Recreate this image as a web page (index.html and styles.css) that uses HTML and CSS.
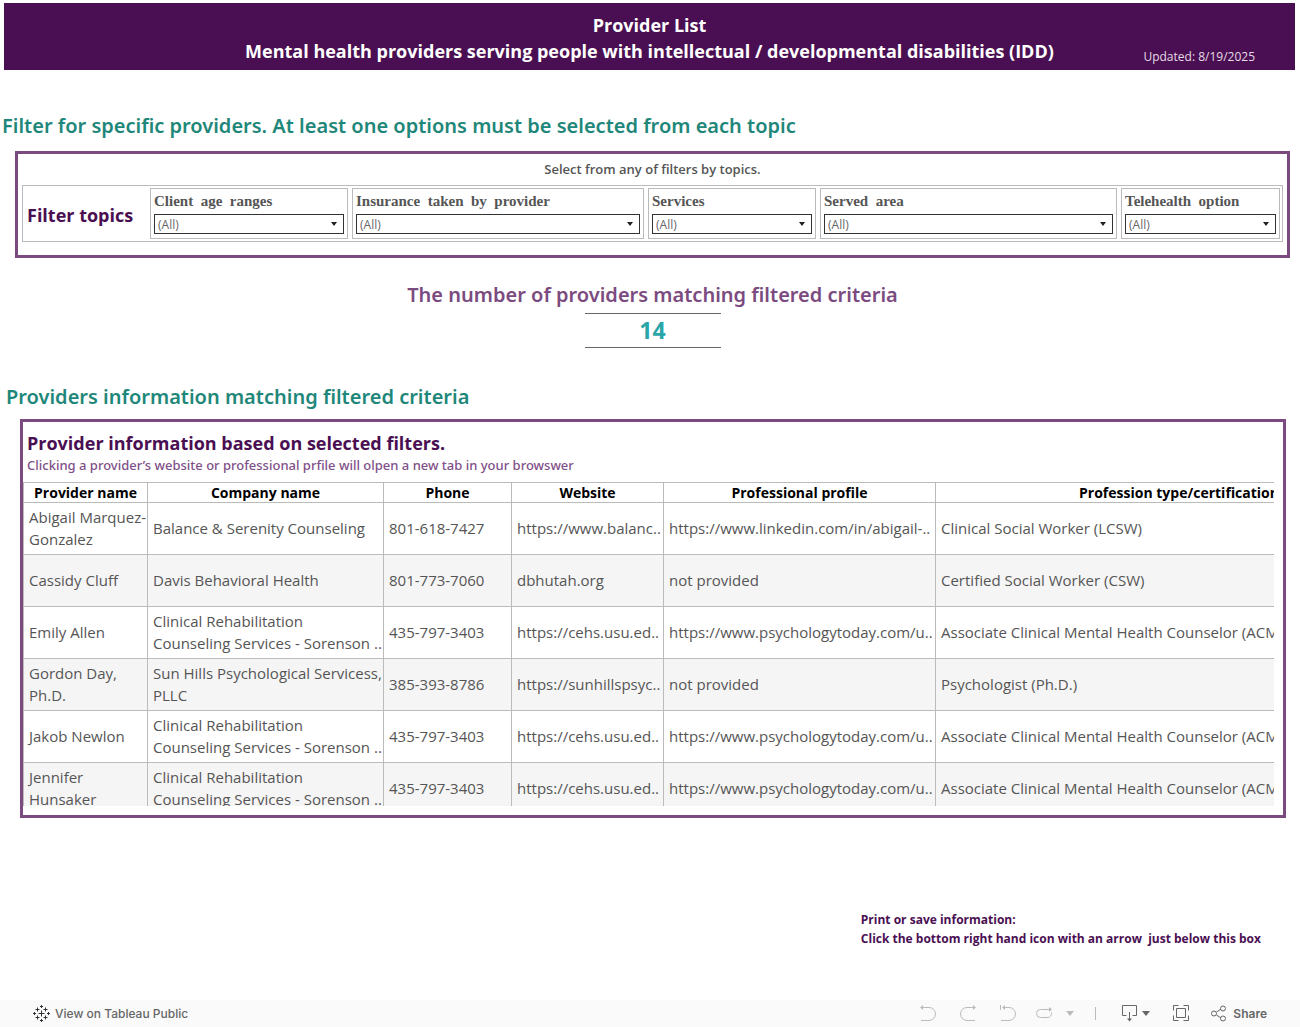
FILE: index.html
```html
<!DOCTYPE html>
<html lang="en">
<head>
<meta charset="utf-8">
<title>Provider List</title>
<link rel="stylesheet" href="styles.css">
</head>
<body>
<header class="banner">
  <h1 class="banner-title">Provider List<br>Mental health providers serving people with intellectual / developmental disabilities (IDD)</h1>
  <p class="updated">Updated: 8/19/2025</p>
</header>
<main class="main">
  <h2 class="section-title filter-title">Filter for specific providers. At least one options must be selected from each topic</h2>
  <section class="filter-panel">
    <p class="filter-hint">Select from any of filters by topics.</p>
    <div class="filters">
      <h3 class="filters-label">Filter topics</h3>
      <div class="filter"><label for="age">Client  age  ranges</label><div class="dropdown"><select id="age"><option>(All)</option></select></div></div>
      <div class="filter"><label for="insurance">Insurance  taken  by  provider</label><div class="dropdown"><select id="insurance"><option>(All)</option></select></div></div>
      <div class="filter"><label for="services">Services</label><div class="dropdown"><select id="services"><option>(All)</option></select></div></div>
      <div class="filter"><label for="area">Served  area</label><div class="dropdown"><select id="area"><option>(All)</option></select></div></div>
      <div class="filter"><label for="telehealth">Telehealth  option</label><div class="dropdown"><select id="telehealth"><option>(All)</option></select></div></div>
    </div>
  </section>
  <section class="count">
    <h2 class="count-title">The number of providers matching filtered criteria</h2>
    <p class="count-value">14</p>
  </section>
  <h2 class="section-title results-title">Providers information matching filtered criteria</h2>
  <section class="results">
    <h3 class="results-heading">Provider information based on selected filters.</h3>
    <p class="results-note">Clicking a provider’s website or professional prfile will olpen a new tab in your browswer</p>
    <div class="table-view">
      <table class="providers">
        <colgroup><col class="c-name"><col class="c-company"><col class="c-phone"><col class="c-site"><col class="c-profile"><col class="c-type"></colgroup>
        <thead>
          <tr><th>Provider name</th><th>Company name</th><th>Phone</th><th>Website</th><th>Professional profile</th><th>Profession type/certification</th></tr>
        </thead>
        <tbody>
          <tr><td>Abigail Marquez-<br>Gonzalez</td><td>Balance &amp; Serenity Counseling</td><td>801-618-7427</td><td><a href="#">https://www.balanc..</a></td><td><a href="#">https://www.linkedin.com/in/abigail-..</a></td><td>Clinical Social Worker (LCSW)</td></tr>
          <tr><td>Cassidy Cluff</td><td>Davis Behavioral Health</td><td>801-773-7060</td><td><a href="#">dbhutah.org</a></td><td>not provided</td><td>Certified Social Worker (CSW)</td></tr>
          <tr><td>Emily Allen</td><td>Clinical Rehabilitation<br>Counseling Services - Sorenson ..</td><td>435-797-3403</td><td><a href="#">https://cehs.usu.ed..</a></td><td><a href="#">https://www.psychologytoday.com/u..</a></td><td>Associate Clinical Mental Health Counselor (ACMHC)</td></tr>
          <tr><td>Gordon Day,<br>Ph.D.</td><td>Sun Hills Psychological Servicess,<br>PLLC</td><td>385-393-8786</td><td><a href="#">https://sunhillspsyc..</a></td><td>not provided</td><td>Psychologist (Ph.D.)</td></tr>
          <tr><td>Jakob Newlon</td><td>Clinical Rehabilitation<br>Counseling Services - Sorenson ..</td><td>435-797-3403</td><td><a href="#">https://cehs.usu.ed..</a></td><td><a href="#">https://www.psychologytoday.com/u..</a></td><td>Associate Clinical Mental Health Counselor (ACMHC)</td></tr>
          <tr><td>Jennifer<br>Hunsaker</td><td>Clinical Rehabilitation<br>Counseling Services - Sorenson ..</td><td>435-797-3403</td><td><a href="#">https://cehs.usu.ed..</a></td><td><a href="#">https://www.psychologytoday.com/u..</a></td><td>Associate Clinical Mental Health Counselor (ACMHC)</td></tr>
        </tbody>
      </table>
    </div>
  </section>
  <p class="print-note">Print or save information:
Click the bottom right hand icon with an arrow  just below this box</p>
</main>
<footer class="toolbar">
  <a class="public-link" href="#">
    <svg width="17" height="17" viewBox="0 0 17 17" stroke="#333"><path d="M8.500 5.500v6M5.500 8.500h6M4.500 2.500v4M2.500 4.500h4M12.500 2.500v4M10.500 4.500h4M4.500 10.500v4M2.500 12.500h4M12.500 10.500v4M10.500 12.500h4M8.500 0v3M7 1.500h3M8.500 14v3M7 15.500h3M1.500 7v3M0 8.500h3M15.500 7v3M14 8.500h3"/></svg>
    View on Tableau Public
  </a>
  <div class="tools">
    <div class="history">
      <button class="tool" type="button" aria-label="Undo" disabled><svg width="16" height="17" viewBox="0 0 16 17"><path class="line" d="M2 2.500h7a6.500 6.500 0 0 1 0 13H1"/><path class="fill" d="M0 2.500 3 0v5z"/></svg></button>
      <button class="tool" type="button" aria-label="Redo" disabled><svg width="16" height="17" viewBox="0 0 16 17"><path class="line" d="M14 2.500H7a6.500 6.500 0 0 0 0 13h8"/><path class="fill" d="M16 2.500 13 0v5z"/></svg></button>
      <button class="tool" type="button" aria-label="Revert" disabled><svg width="16" height="17" viewBox="0 0 16 17"><path class="line" d="M.5 0v5M4 2.500h5a6.500 6.500 0 0 1 0 13H1"/><path class="fill" d="M2 2.500 5 0v5z"/></svg></button>
    </div>
    <button class="tool refresh" type="button" aria-label="Refresh" disabled><svg width="17" height="17" viewBox="0 0 17 17"><path class="line" d="M14 4.500H4.500a4 4 0 0 0 0 8h7.500a4 4 0 0 0 3.500-4.500V7.500"/><path class="fill" d="m16 4.500-3-2.500v5z"/></svg><svg width="8" height="5" viewBox="0 0 8 5"><path class="fill" d="M0 0h8L4 5z"/></svg></button>
    <span class="divider"></span>
    <button class="tool download" type="button" aria-label="Download"><svg width="15" height="17" viewBox="0 0 15 17"><path class="line" d="M4.500 10.500h-4V.5h14v10h-4M7.500 7v8"/><path class="fill" d="M5 13.500h5L7.500 16.500z"/></svg><svg width="8" height="5" viewBox="0 0 8 5"><path class="fill" d="M0 0h8L4 5z"/></svg></button>
    <button class="tool fullscreen" type="button" aria-label="Full screen"><svg width="17" height="17" viewBox="0 0 17 17"><path class="line" d="M3.500 3.500h9v9h-9zM.5 5.500V.5h5M10.500.5h5v5M15.500 10.500v5h-5M5.500 15.500h-5v-5"/></svg></button>
    <button class="tool share" type="button"><svg width="16" height="17" viewBox="0 0 16 17"><path class="line" d="M5.500 7 10 4M5.500 10l4.500 3M.5 8.500a2.500 2.500 0 1 0 5 0 2.500 2.500 0 1 0-5 0M9.500 3.500a2.500 2.500 0 1 0 5 0 2.500 2.500 0 1 0-5 0M9.500 13.500a2.500 2.500 0 1 0 5 0 2.500 2.500 0 1 0-5 0"/></svg>Share</button>
  </div>
</footer>
</body>
</html>
```

FILE: styles.css
```css
* { box-sizing: border-box; }

body {
  margin: 0;
  min-height: 100vh;
  display: flex;
  flex-direction: column;
  background: #fff;
  color: #555;
  font-family: "Open Sans", "Noto Sans", sans-serif;
}

h1, h2, h3, p { margin: 0; }

.banner {
  display: grid;
  margin: 3px 5px 0 4px;
  padding: 9px 40px 5px;
  background: #4a0f52;
  color: #fff;
}
.banner-title {
  grid-area: 1 / 1;
  text-align: center;
  font-size: 18px;
  line-height: 26px;
  font-weight: 700;
  margin-bottom: 1px;
}
.updated {
  grid-area: 1 / 1;
  place-self: end;
  font-size: 12px;
  line-height: 16px;
  font-weight: 400;
  color: #e4dbe5;
}

.main { flex: 1; }

.section-title {
  color: #1f877a;
  font-family: "Noto Sans", sans-serif;
  font-size: 20px;
  line-height: 28px;
  font-weight: 600;
}
.filter-title { margin: 42px 0 0 2px; }
.results-title { margin: 35px 0 0 6px; }

.filter-panel {
  margin: 11px 10px 0 15px;
  border: 3px solid #7b4b80;
  padding: 3px 4px 13px;
}
.filter-hint {
  text-align: center;
  font-size: 13px;
  line-height: 24px;
  font-weight: 600;
  margin-bottom: 4px;
}
.filters {
  display: grid;
  grid-template-columns: 121fr 198fr 292fr 168fr 297fr 159fr;
  gap: 4px;
  padding: 2px;
  border: 1px solid #bbb;
}
.filters-label {
  align-self: center;
  padding: 2px 0 0 2px;
  white-space: nowrap;
  font-size: 18px;
  line-height: 26px;
  font-weight: 700;
  color: #4a0f52;
}
.filter {
  border: 1px solid #bbb;
  padding: 2px 3px 4px;
}
.filter label {
  display: block;
  white-space: pre;
  font-family: "Liberation Serif", serif;
  font-size: 15px;
  line-height: 20px;
  font-weight: 700;
  margin-bottom: 3px;
}
.dropdown { display: grid; align-items: center; }
.dropdown select {
  grid-area: 1 / 1;
  appearance: none;
  width: 100%;
  height: 20px;
  padding: 0 3px;
  border: 1px solid #333;
  border-radius: 0;
  background: #fff;
  color: #666;
  font-family: "Open Sans", sans-serif;
  font-size: 12px;
  font-weight: 400;
}
.dropdown::after {
  content: "";
  grid-area: 1 / 1;
  justify-self: end;
  margin-right: 7px;
  border: 3px solid transparent;
  border-top: 4px solid #222;
  border-bottom: 0;
  pointer-events: none;
}

.count { margin: 23px 10px 0 15px; text-align: center; }
.count-title {
  font-family: "Noto Sans", sans-serif;
  font-size: 20px;
  line-height: 28px;
  font-weight: 600;
  color: #7b4b80;
}
.count-value {
  width: 136px;
  margin: 4px auto 0;
  border: solid #666;
  border-width: 1px 0;
  font-size: 23px;
  line-height: 33px;
  font-weight: 700;
  color: #2aa5a8;
}

.results {
  margin: 8px 14px 0 20px;
  border: 3px solid #7b4b80;
  padding: 8px 9px 9px 0;
}
.results-heading {
  padding-left: 4px;
  font-size: 18px;
  line-height: 26px;
  font-weight: 700;
  color: #4a0f52;
}
.results-note {
  padding-left: 4px;
  font-family: "Noto Sans", sans-serif;
  font-size: 13px;
  line-height: 18px;
  font-weight: 500;
  color: #7f5089;
}
.table-view {
  margin-top: 8px;
  height: 324px;
  overflow: hidden;
}
.providers {
  table-layout: fixed;
  width: 1400px;
  border-collapse: separate;
  border-spacing: 0;
  border-top: 1px solid #bbb;
  border-left: 1px solid #bbb;
}
.c-name { width: 124px; }
.c-company { width: 236px; }
.c-phone { width: 128px; }
.c-site { width: 152px; }
.c-profile { width: 272px; }
.c-type { width: 487px; }
.providers th, .providers td {
  border: solid #bbb;
  border-width: 0 1px 1px 0;
  white-space: nowrap;
}
.providers th {
  height: 20px;
  padding: 1px 0 0;
  font-size: 14px;
  line-height: 18px;
  font-weight: 700;
  color: #000;
}
.providers td {
  height: 52px;
  padding: 0 0 2px 5px;
  font-size: 15px;
  line-height: 22px;
}
.providers tbody tr:nth-child(even) { background: #f5f5f5; }
.providers a { color: inherit; text-decoration: none; }

.print-note {
  width: max-content;
  margin: 92px 39px 0 auto;
  white-space: pre;
  font-size: 12px;
  line-height: 19px;
  font-weight: 700;
  color: #4a0f52;
}

.toolbar {
  display: flex;
  justify-content: space-between;
  align-items: center;
  height: 27px;
  padding: 0 33px;
  background: #fafafa;
  font-family: "Inter", sans-serif;
  font-size: 12px;
  font-weight: 500;
}
.public-link {
  display: flex;
  align-items: center;
  gap: 5px;
  color: #666;
  text-decoration: none;
}
.tools { display: flex; align-items: center; gap: 20px; }
.history { display: flex; align-items: center; gap: 24px; }
.tool {
  display: flex;
  align-items: center;
  padding: 0;
  border: 0;
  background: none;
  color: #666;
  font: inherit;
}
.tool:disabled { color: #bbb; }
.tool svg { display: block; }
.line { fill: none; stroke: currentColor; }
.fill { fill: currentColor; }
.refresh { gap: 13px; }
.download { gap: 5px; }
.fullscreen { margin: 0 1px 0 3px; }
.share { gap: 6px; font-weight: 600; }
.divider { width: 1px; height: 13px; margin: 0 6px 0 1px; background: #bbb; }
```
